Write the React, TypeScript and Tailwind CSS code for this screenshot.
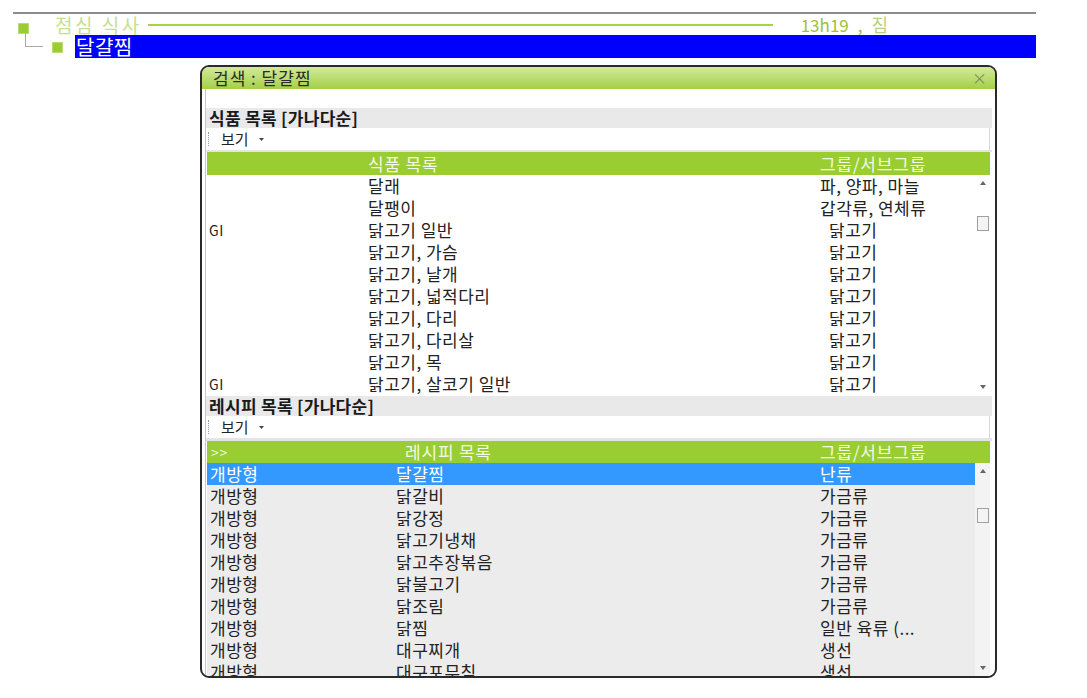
import React from "react";

const FONT = '"Noto Sans CJK KR", "Noto Sans", sans-serif';

const foods: [string, string, string, boolean][] = [
  ["", "달래", "파, 양파, 마늘", false],
  ["", "달팽이", "갑각류, 연체류", false],
  ["GI", "닭고기 일반", "닭고기", true],
  ["", "닭고기, 가슴", "닭고기", true],
  ["", "닭고기, 날개", "닭고기", true],
  ["", "닭고기, 넓적다리", "닭고기", true],
  ["", "닭고기, 다리", "닭고기", true],
  ["", "닭고기, 다리살", "닭고기", true],
  ["", "닭고기, 목", "닭고기", true],
  ["GI", "닭고기, 살코기 일반", "닭고기", true],
];

const recipes: [string, string, string][] = [
  ["개방형", "달걀찜", "난류"],
  ["개방형", "닭갈비", "가금류"],
  ["개방형", "닭강정", "가금류"],
  ["개방형", "닭고기냉채", "가금류"],
  ["개방형", "닭고추장볶음", "가금류"],
  ["개방형", "닭불고기", "가금류"],
  ["개방형", "닭조림", "가금류"],
  ["개방형", "닭찜", "일반 육류 (..."],
  ["개방형", "대구찌개", "생선"],
  ["개방형", "대구포무침", "생선"],
];

function Scrollbar({ bg, thumbTop }: { bg: string; thumbTop: string }) {
  return (
    <div className={`w-[15px] flex flex-col items-center justify-between py-[6px] ${bg}`}>
      <div className="flex flex-col items-center">
        <svg width="6" height="4" viewBox="0 0 6 4">
          <path d="M0 4 L3 0 L6 4 Z" fill="#666" />
        </svg>
        <div className={`w-[12px] h-[15px] border border-[#a0a0a0] bg-[#f4f4f4] ${thumbTop}`} />
      </div>
      <svg width="6" height="4" viewBox="0 0 6 4">
        <path d="M0 0 L3 4 L6 0 Z" fill="#666" />
      </svg>
    </div>
  );
}

function SectionHeader({ text }: { text: string }) {
  return (
    <div className="h-[20px] bg-[#e9e9e9] flex items-center pl-[3px] text-[17px] tracking-[0.3px] font-bold text-[#1a1a1a] leading-[20px] overflow-hidden">
      {text}
    </div>
  );
}

function Toolbar() {
  return (
    <div className="h-[22px] bg-white flex items-center border-r border-[#d8d8d8] mr-[2px]">
      <div className="h-[14px] ml-[2px] border-l border-dotted border-[#9a9a9a]" />
      <span className="ml-[12px] text-[15px] text-[#222] leading-[22px]">보기</span>
      <svg className="ml-[10px]" width="5" height="3" viewBox="0 0 5 3">
        <path d="M0 0 L2.5 3 L5 0 Z" fill="#444" />
      </svg>
    </div>
  );
}

export default function App() {
  return (
    <div
      className="w-[1087px] h-[698px] bg-white overflow-hidden relative"
      style={{ fontFamily: FONT }}
    >
      {/* top tree */}
      <div className="ml-[13px] mt-[12px] w-[1023px] border-t-2 border-[#8c8c8c]">
        <div className="h-[21px] flex items-center">
          <div className="ml-[5px] w-[11px] h-[11px] bg-[#9acd32] border border-[#b8dd70] mt-[7px]" />
          <span className="ml-[26px] text-[19px] leading-[21px] tracking-[2.5px] text-[#c6df90]">점심 식사</span>
          <div className="ml-[6px] w-[625px] h-[2px] bg-[#a8d143]" />
          <span className="ml-[28px] text-[17px] leading-[21px] text-[#9fc03a]">13h19</span>
          <span className="ml-[9px] text-[17px] leading-[21px] text-[#9fc03a]">,</span>
          <span className="ml-[9px] text-[18px] leading-[21px] text-[#b5d27a]">짐</span>
        </div>
        <div className="h-[23px] flex items-start">
          <div className="ml-[12px] -mt-[2px] w-[18px] h-[14px] border-l border-b border-[#a8a8a8]" />
          <div className="ml-[9px] mt-[7px] w-[11px] h-[11px] bg-[#9acd32] border border-[#b8dd70]" />
          <div className="ml-[12px] flex-1 h-[23px] bg-[#0000ff] flex items-center pl-[1px]">
            <span className="text-[20px] tracking-[0.5px] leading-[23px] text-white">달걀찜</span>
          </div>
        </div>
      </div>

      {/* dialog */}
      <div className="ml-[200px] mt-[7px] w-[797px] h-[613px] border-2 border-[#2a2a2a] rounded-[9px] overflow-hidden flex flex-col bg-white">
        <div className="h-[22px] shrink-0 bg-gradient-to-b from-[#d3ea98] to-[#a4cf44] flex items-center justify-between pl-[11px] pr-[8px]">
          <span className="text-[17px] tracking-[1px] text-[#2a2a2a] leading-[22px]">검색 : 달걀찜</span>
          <span className="text-[15px] text-[#7c8f5a] leading-[22px]">×</span>
        </div>
        <div className="flex-1 flex flex-col pl-[3px] pr-[3px] overflow-hidden">
          <div className="flex-1 flex flex-col border-l border-[#c8c8c8] overflow-hidden">
            <div className="h-[19px] shrink-0 bg-white" />
            <SectionHeader text="식품 목록 [가나다순]" />
            <Toolbar />
            <div className="h-[2px] bg-[#e4e4e4]" />
            {/* food table */}
            <div className="ml-[1px] mr-[2px] flex flex-col">
              <div className="h-[23px] bg-[#9acd32] grid grid-cols-[161px_452px_1fr] items-center text-[17px] tracking-[0.8px] text-[#f2f9e4] leading-[23px]">
                <span />
                <span>식품 목록</span>
                <span>그룹/서브그룹</span>
              </div>
              <div className="flex">
                <div className="flex-1 flex flex-col bg-white">
                  {foods.map(([a, b, c, ind], i) => (
                    <div
                      key={i}
                      className="h-[22px] grid grid-cols-[161px_452px_1fr] items-center text-[17px] tracking-[0.5px] text-[#222] leading-[22px]"
                    >
                      <span className="pl-[2px] text-[14px]">{a}</span>
                      <span>{b}</span>
                      <span className={ind ? "pl-[9px]" : ""}>{c}</span>
                    </div>
                  ))}
                </div>
                <Scrollbar bg="bg-white" thumbTop="mt-[31px]" />
              </div>
            </div>
            <div className="h-[1px]" />
            <SectionHeader text="레시피 목록 [가나다순]" />
            <Toolbar />
            <div className="h-[3px] bg-[#e4e4e4]" />
            {/* recipe table */}
            <div className="ml-[1px] mr-[2px] flex flex-col flex-1 overflow-hidden">
              <div className="h-[22px] shrink-0 bg-[#9acd32] grid grid-cols-[198px_415px_1fr] items-center text-[17px] tracking-[0.8px] text-[#f2f9e4] leading-[22px]">
                <span className="pl-[4px] text-[14px]">&gt;&gt;</span>
                <span>레시피 목록</span>
                <span>그룹/서브그룹</span>
              </div>
              <div className="flex flex-1 overflow-hidden">
                <div className="flex-1 flex flex-col bg-[#ececec] overflow-hidden">
                  {recipes.map(([a, b, c], i) => (
                    <div
                      key={i}
                      className={`h-[22px] shrink-0 grid grid-cols-[189px_424px_1fr] items-center text-[17px] tracking-[0.5px] leading-[22px] ${
                        i === 0 ? "bg-[#3399ff] text-white" : "text-[#222]"
                      }`}
                    >
                      <span className="pl-[3px]">{a}</span>
                      <span>{b}</span>
                      <span>{c}</span>
                    </div>
                  ))}
                </div>
                <Scrollbar bg="bg-[#f3f3f3]" thumbTop="mt-[35px]" />
              </div>
            </div>
          </div>
        </div>
      </div>
    </div>
  );
}
